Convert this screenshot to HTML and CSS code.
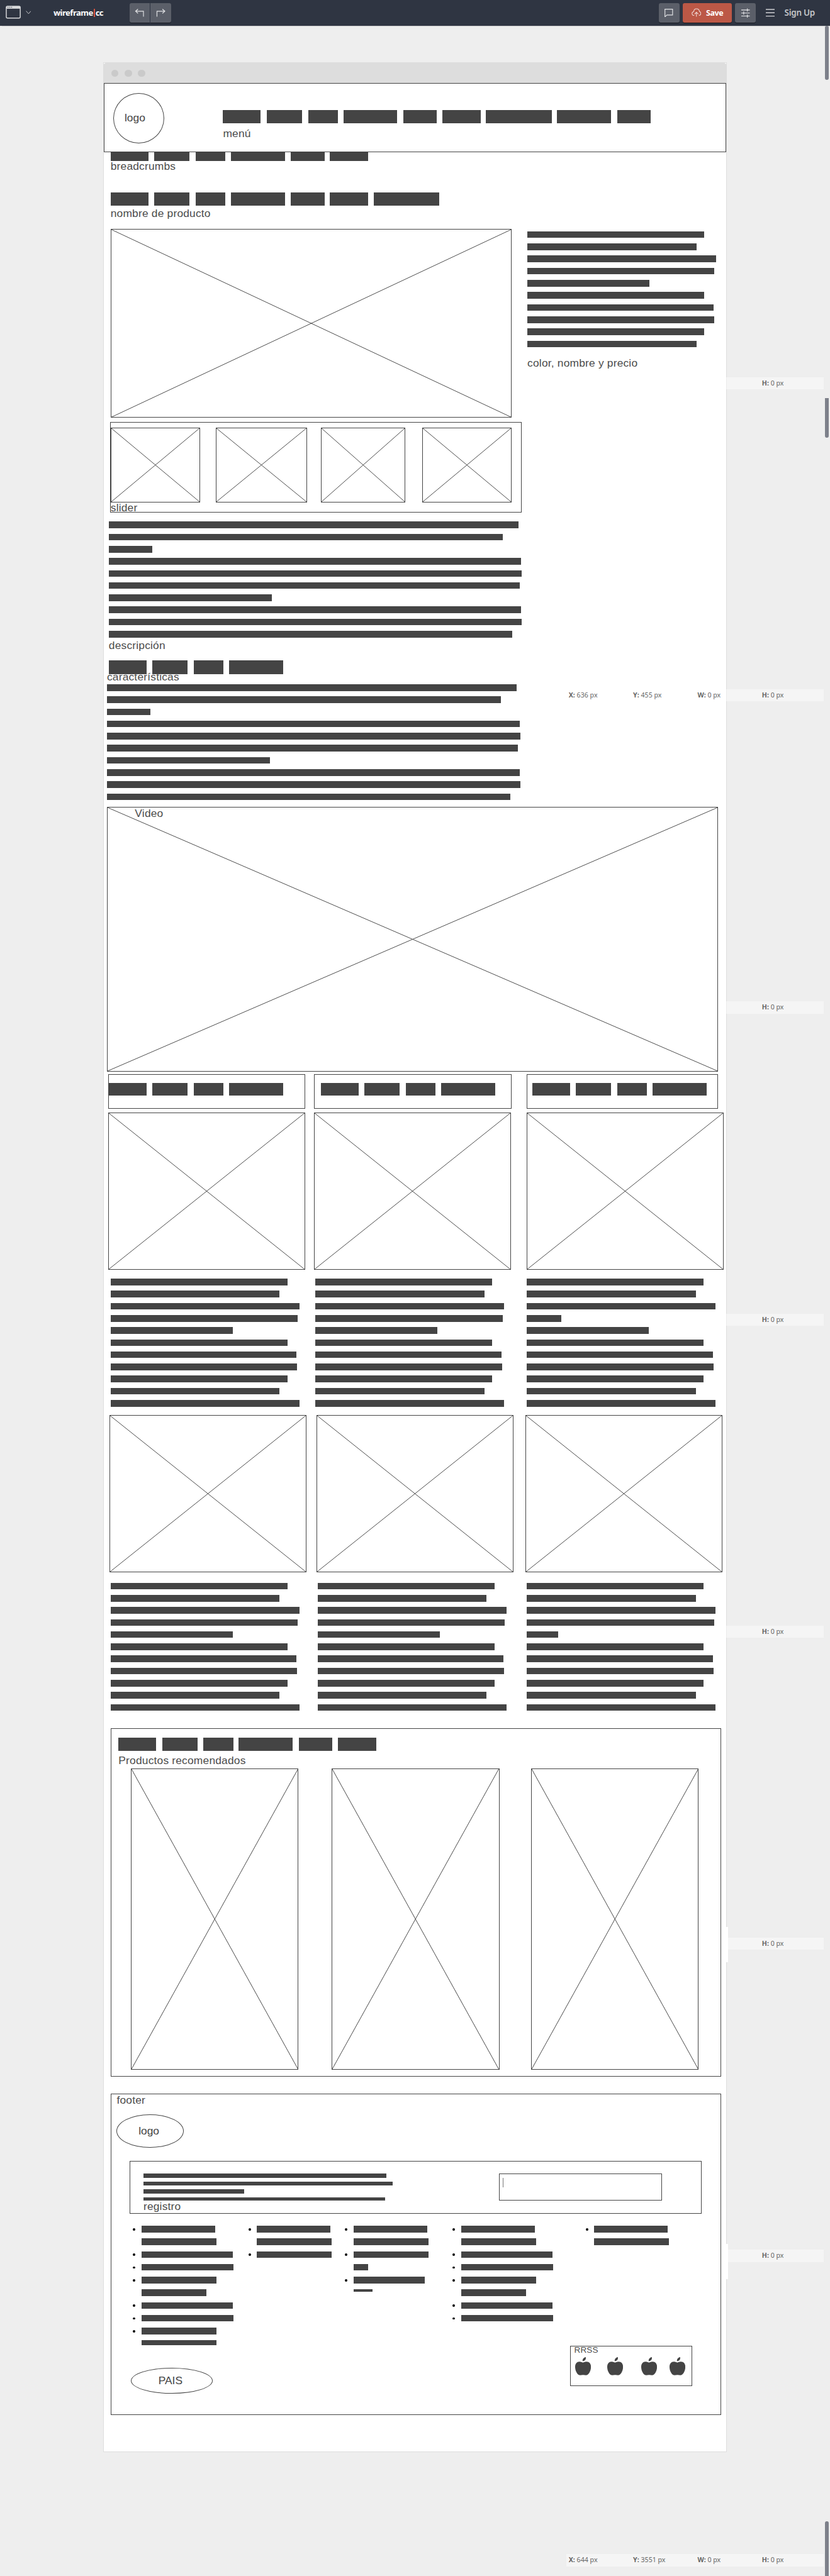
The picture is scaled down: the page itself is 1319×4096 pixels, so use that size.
FILE: index.html
```
<!DOCTYPE html>
<html lang="es">
<head>
<meta charset="utf-8">
<title>wireframe|cc</title>
<link rel="stylesheet" href="styles.css">
</head>
<body>
<svg width="0" height="0" class="defs">
  <symbol id="apple" viewBox="0 0 26 30">
    <path d="M17.5 0C18.2 3.800 16 6.400 12.200 6.600C12 3.200 13.800.6 17.500 0Z"/>
    <path d="M12.800 9C16 7.600 20 6.700 22.800 8.600C25.200 10.300 26.300 13.500 26 17C25.700 22 23.200 27.500 20 29.300C17.800 30.400 15.500 29.200 13 29.200C10.500 29.200 8.200 30.400 6 29.300C2.800 27.500.3 22 0 17C-.3 13.500.8 10.300 3.200 8.600C6 6.700 9.600 7.600 12.800 9Z"/>
  </symbol>
</svg>

<header class="topbar">
  <svg class="window-icon" width="25" height="22" viewBox="0 0 25 22"><rect x="1" y="1" width="23" height="19.500" rx="2" fill="none" stroke="#d9dadc" stroke-width="1.500"/><path d="M1 1h23v4H1z" fill="#d9dadc"/><path d="M3 2.500h1.500M6 2.500h1.500M9 2.500h1.500" stroke="#2f3542"/></svg>
  <svg class="chevron" width="9" height="6" viewBox="0 0 9 6"><path d="M.5.5l4 4.500 4-4.500" fill="none" stroke="#c9cacd"/></svg>
  <span class="brand">wireframe<b class="pipe"></b>cc</span>
  <div class="history">
    <span class="btn"><svg width="16" height="14" viewBox="0 0 16 14"><path d="M14.500 13V4H1.500M5.500.5L1.500 4l4 3.500" fill="none" stroke="#e3e4e6" stroke-width="1.200"/></svg></span>
    <span class="btn"><svg width="16" height="14" viewBox="0 0 16 14"><path d="M1.500 13V4h13M10.500.5l4 3.500-4 3.500" fill="none" stroke="#e3e4e6" stroke-width="1.200"/></svg></span>
  </div>
  <div class="actions">
    <span class="btn"><svg width="14" height="14" viewBox="0 0 14 14"><path d="M.7.7h12.600v9.600H4L.7 13.300z" fill="none" stroke="#e3e4e6" stroke-width="1.200"/></svg></span>
    <span class="btn save"><svg width="16" height="15" viewBox="0 0 16 15"><path d="M4.500 12C2 12 .8 10.500.8 8.800.8 7 2.200 6 3.500 5.800 3.800 3 5.500 1 8 1c3 0 4.800 2 5 4.500 1.500.6 2.300 1.800 2.300 3.300 0 1.800-1.300 3-3.300 3.200M8 14V7M5 9.800l3-3 3 3" fill="none" stroke="#f0dcd8" stroke-width="1.100"/></svg>Save</span>
    <span class="btn"><svg width="14" height="16" viewBox="0 0 14 16"><path d="M0 3h14M0 8h14M0 13h14M10 .5v5M4 5.500v5M10 10.500v5" fill="none" stroke="#e3e4e6" stroke-width="1.200"/></svg></span>
    <svg class="menu-icon" width="15" height="13" viewBox="0 0 15 13"><path d="M0 1h15M0 6.500h15M0 12h15" stroke="#d0d1d4" stroke-width="1.400"/></svg>
    <span class="signup">Sign Up</span>
  </div>
</header>

<main class="workspace">
  <article class="page">
    <div class="chrome"><i></i><i></i><i></i></div>

    <section class="head">
      <div class="circle">logo</div>
      <div class="nav">
        <div class="words"><i></i><i></i><i></i><i></i><i></i><i></i><i></i><i></i><i></i></div>
        <p class="label">menú</p>
      </div>
    </section>

    <section class="intro">
      <div class="words crumbs"><i></i><i></i><i></i><i></i><i></i><i></i></div>
      <p class="label crumbs-label">breadcrumbs</p>
      <div class="words"><i></i><i></i><i></i><i></i><i></i><i></i><i></i></div>
      <p class="label name-label">nombre de producto</p>
    </section>

    <section class="product">
      <div class="gallery">
        <div class="pic main-pic"><svg><line x1="0" y1="0" x2="100%" y2="100%"/><line x1="100%" y1="0" x2="0" y2="100%"/></svg></div>
        <div class="slider">
          <div class="thumbs">
            <div class="pic"><svg><line x1="0" y1="0" x2="100%" y2="100%"/><line x1="100%" y1="0" x2="0" y2="100%"/></svg></div>
            <div class="pic"><svg><line x1="0" y1="0" x2="100%" y2="100%"/><line x1="100%" y1="0" x2="0" y2="100%"/></svg></div>
            <div class="pic"><svg><line x1="0" y1="0" x2="100%" y2="100%"/><line x1="100%" y1="0" x2="0" y2="100%"/></svg></div>
            <div class="pic"><svg><line x1="0" y1="0" x2="100%" y2="100%"/><line x1="100%" y1="0" x2="0" y2="100%"/></svg></div>
          </div>
          <p class="label">slider</p>
        </div>
      </div>
      <div class="details">
        <div class="para"><i></i><i></i><i></i><i></i><i></i><i></i><i></i><i></i><i></i><i></i></div>
        <p class="label">color, nombre y precio</p>
      </div>
    </section>

    <section class="description">
      <div class="para wide"><i></i><i></i><i></i><i></i><i></i><i></i><i></i><i></i><i></i><i></i></div>
      <p class="label">descripción</p>
      <div class="words"><i></i><i></i><i></i><i></i></div>
    </section>
    <section class="features">
      <p class="label">características</p>
      <div class="para wide"><i></i><i></i><i></i><i></i><i></i><i></i><i></i><i></i><i></i><i></i></div>
    </section>

    <div class="pic video"><svg><line x1="0" y1="0" x2="100%" y2="100%"/><line x1="100%" y1="0" x2="0" y2="100%"/></svg><p class="label">Video</p></div>

    <section class="titles">
      <div class="words"><i></i><i></i><i></i><i></i></div>
      <div class="words"><i></i><i></i><i></i><i></i></div>
      <div class="words"><i></i><i></i><i></i><i></i></div>
    </section>
    <section class="pics pics-a">
      <div class="pic"><svg><line x1="0" y1="0" x2="100%" y2="100%"/><line x1="100%" y1="0" x2="0" y2="100%"/></svg></div>
      <div class="pic"><svg><line x1="0" y1="0" x2="100%" y2="100%"/><line x1="100%" y1="0" x2="0" y2="100%"/></svg></div>
      <div class="pic"><svg><line x1="0" y1="0" x2="100%" y2="100%"/><line x1="100%" y1="0" x2="0" y2="100%"/></svg></div>
    </section>
    <section class="texts texts-a">
      <div class="para"><i></i><i></i><i></i><i></i><i></i><i></i><i></i><i></i><i></i><i></i><i></i></div>
      <div class="para"><i></i><i></i><i></i><i></i><i></i><i></i><i></i><i></i><i></i><i></i><i></i></div>
      <div class="para"><i></i><i></i><i></i><i style="width:57px"></i><i></i><i></i><i></i><i></i><i></i><i></i><i></i></div>
    </section>
    <section class="pics pics-b">
      <div class="pic"><svg><line x1="0" y1="0" x2="100%" y2="100%"/><line x1="100%" y1="0" x2="0" y2="100%"/></svg></div>
      <div class="pic"><svg><line x1="0" y1="0" x2="100%" y2="100%"/><line x1="100%" y1="0" x2="0" y2="100%"/></svg></div>
      <div class="pic"><svg><line x1="0" y1="0" x2="100%" y2="100%"/><line x1="100%" y1="0" x2="0" y2="100%"/></svg></div>
    </section>
    <section class="texts texts-b">
      <div class="para"><i></i><i></i><i></i><i></i><i></i><i></i><i></i><i></i><i></i><i></i><i></i></div>
      <div class="para"><i></i><i></i><i></i><i></i><i></i><i></i><i></i><i></i><i></i><i></i><i></i></div>
      <div class="para"><i></i><i></i><i></i><i></i><i style="width:52px"></i><i></i><i></i><i></i><i></i><i></i><i></i></div>
    </section>

    <section class="recommended">
      <div class="words"><i></i><i></i><i></i><i></i><i></i><i></i></div>
      <p class="label">Productos recomendados</p>
      <div class="cards">
        <div class="pic"><svg><line x1="0" y1="0" x2="100%" y2="100%"/><line x1="100%" y1="0" x2="0" y2="100%"/></svg></div>
        <div class="pic"><svg><line x1="0" y1="0" x2="100%" y2="100%"/><line x1="100%" y1="0" x2="0" y2="100%"/></svg></div>
        <div class="pic"><svg><line x1="0" y1="0" x2="100%" y2="100%"/><line x1="100%" y1="0" x2="0" y2="100%"/></svg></div>
      </div>
    </section>

    <footer class="footer">
      <p class="label">footer</p>
      <div class="oval">logo</div>
      <div class="register">
        <div class="register-text">
          <div class="para fine"><i></i><i></i><i></i><i></i></div>
          <p class="label">registro</p>
        </div>
        <div class="field"><span class="caret"></span></div>
      </div>
      <div class="lists">
        <ul>
          <li><i style="width:121px"></i><i style="width:123px"></i></li>
          <li><i style="width:150px"></i></li>
          <li><i style="width:151px"></i></li>
          <li><i style="width:123px"></i><i style="width:107px"></i></li>
          <li><i style="width:150px"></i></li>
          <li><i style="width:151px"></i></li>
          <li><i style="width:123px"></i><i class="cut" style="width:123px"></i></li>
        </ul>
        <ul>
          <li><i style="width:121px"></i><i style="width:123px"></i></li>
          <li><i style="width:123px"></i></li>
        </ul>
        <ul>
          <li><i style="width:121px"></i><i style="width:123px"></i></li>
          <li><i style="width:123px"></i><i style="width:24px"></i></li>
          <li><i style="width:117px"></i><i class="sliver" style="width:31px"></i></li>
        </ul>
        <ul>
          <li><i style="width:121px"></i><i style="width:123px"></i></li>
          <li><i style="width:150px"></i></li>
          <li><i style="width:151px"></i></li>
          <li><i style="width:123px"></i><i style="width:107px"></i></li>
          <li><i style="width:150px"></i></li>
          <li><i style="width:151px"></i></li>
        </ul>
        <ul>
          <li><i style="width:121px"></i><i style="width:123px"></i></li>
        </ul>
      </div>
      <div class="closing">
        <div class="oval country">PAIS</div>
        <div class="social">
          <p class="label">RRSS</p>
          <div class="apples">
            <svg><use href="#apple"/></svg>
            <svg><use href="#apple"/></svg>
            <svg><use href="#apple"/></svg>
            <svg><use href="#apple"/></svg>
          </div>
        </div>
      </div>
    </footer>
  </article>

  <span class="nub nub-a"></span>
  <span class="nub nub-b"></span>
  <div class="status s1"><span></span><span></span><span></span><span><b>H:</b> 0 px</span></div>
  <div class="status s2"><span><b>X:</b> 636 px</span><span><b>Y:</b> 455 px</span><span><b>W:</b> 0 px</span><span><b>H:</b> 0 px</span></div>
  <div class="status s3"><span></span><span></span><span></span><span><b>H:</b> 0 px</span></div>
  <div class="status s4"><span></span><span></span><span></span><span><b>H:</b> 0 px</span></div>
  <div class="status s5"><span></span><span></span><span></span><span><b>H:</b> 0 px</span></div>
  <div class="status s6"><span></span><span></span><span></span><span><b>H:</b> 0 px</span></div>
  <div class="status s7"><span></span><span></span><span></span><span><b>H:</b> 0 px</span></div>
  <div class="status s8"><span><b>X:</b> 644 px</span><span><b>Y:</b> 3551 px</span><span><b>W:</b> 0 px</span><span><b>H:</b> 0 px</span></div>
  <span class="thumb t1"></span>
  <span class="thumb t2"></span>
  <span class="thumb t3"></span>
</main>
</body>
</html>
```
FILE: styles.css
```
:root { --ink: #444; }
* { box-sizing: border-box; }
html { zoom: .96558; overflow: hidden; background: #eee; }
body { margin: 0; width: 1366px; height: 4242px; background: #eee; color: var(--ink); font-family: "Liberation Sans", Arial, sans-serif; font-size: 18px; line-height: 20px; }
p, ul { margin: 0; padding: 0; }
svg { display: block; flex: none; }
.defs { position: absolute; }

/* toolbar */
.topbar { display: flex; align-items: center; height: 42px; padding-left: 9px; background: #2f3542; box-shadow: 0 1px 1px rgba(0,0,0,.15); font-family: "Noto Sans", sans-serif; }
.window-icon { margin-top: -1px; }
.chevron { margin-left: 8px; }
.brand { display: flex; align-items: center; width: 125px; margin-left: 37px; color: #fff; font: bold 13.500px/20px "Noto Sans", sans-serif; letter-spacing: -.5px; }
.pipe { width: 2px; height: 14px; margin: 0 1px; background: #d9543f; }
.history { display: flex; gap: 1px; }
.history .btn:first-child { border-radius: 3px 0 0 3px; }
.history .btn:last-child { border-radius: 0 3px 3px 0; }
.actions { display: flex; align-items: center; gap: 6px; margin-left: auto; padding-right: 23px; }
.btn { display: flex; align-items: center; justify-content: center; width: 34px; height: 32px; border-radius: 3px; background: #5b5f69; box-shadow: 0 1px 0 #15181f; }
.save { width: 80px; gap: 8px; background: #bc5846; color: #fff; font-size: 13px; font-weight: bold; letter-spacing: -.5px; }
.menu-icon { margin-left: 10px; }
.signup { margin-left: 10px; width: 52px; color: #c4c5c8; font-size: 14px; font-weight: 600; letter-spacing: -.3px; white-space: nowrap; }

/* canvas */
.workspace { position: relative; height: 4200px; padding: 62px 0 0 171px; overflow: hidden; }
.page { width: 1024px; height: 3933px; background: #fff; box-shadow: 0 0 0 1px #ddd; }
.chrome { display: flex; gap: 10px; align-items: center; height: 33px; margin: 0 -1px; padding: 0 13px; border-radius: 5px 5px 0 0; background: #ddd; }
.chrome i { width: 12px; height: 12px; border-radius: 50%; background: #cacaca; }

/* placeholders */
.label { white-space: nowrap; color: #4c4c4c; letter-spacing: .2px; }
.words { display: flex; gap: 9px; height: 22px; }
.words i { width: 62px; background: var(--ink); }
.words i:nth-child(1), .words i:nth-child(2), .words i:nth-child(4), .words i:nth-child(8) { margin-right: 1px; }
.words i:nth-child(2) { width: 58px; }
.words i:nth-child(3) { width: 49px; }
.words i:nth-child(4), .words i:nth-child(8) { width: 89px; }
.words i:nth-child(5), .words i:nth-child(9) { width: 55px; }
.words i:nth-child(6) { width: 63px; }
.words i:nth-child(7) { width: 108px; }
.para { display: flex; flex-direction: column; gap: 9px; }
.para i { height: 11px; width: 291px; background: var(--ink); }
.para i:nth-child(2), .para i:nth-child(10) { width: 278px; }
.para i:nth-child(3), .para i:nth-child(11) { width: 311px; }
.para i:nth-child(4) { width: 308px; }
.para i:nth-child(5) { width: 201px; }
.para i:nth-child(7) { width: 306px; }
.para i:nth-child(8) { width: 307px; }
.wide i:nth-child(1) { width: 674px; }
.wide i:nth-child(2) { width: 648px; }
.wide i:nth-child(3) { width: 72px; }
.wide i:nth-child(4), .wide i:nth-child(8) { width: 679px; }
.wide i:nth-child(5), .wide i:nth-child(9) { width: 680px; }
.wide i:nth-child(6) { width: 676px; }
.wide i:nth-child(7) { width: 268px; }
.wide i:nth-child(10) { width: 664px; }
.pic { border: 1px solid var(--ink); }
.pic svg { width: 100%; height: 100%; stroke: var(--ink); stroke-width: 1; }

.head { display: flex; height: 114px; padding: 15px 0 0 14px; border: 1px solid var(--ink); }
.circle { display: flex; align-items: center; width: 84px; height: 83px; padding-left: 18px; border: 1px solid var(--ink); border-radius: 50%; }
.nav { margin: 28px 0 0 97px; }
.nav .label { margin-top: 7px; }

.intro { padding-left: 11px; }
.crumbs { height: 14px; }
.crumbs-label { margin: -1px 0 33px; }
.name-label { margin-top: 3px; margin-bottom: -1px; }

.product { display: flex; gap: 9px; margin: 16px 0 0 10px; }
.main-pic { width: 660px; height: 311px; margin-left: 1px; }
.slider { width: 678px; height: 149px; margin-top: 7px; padding-top: 8px; border: 1px solid var(--ink); }
.thumbs { display: flex; height: 123px; }
.thumbs .pic { width: 147px; height: 123px; }
.thumbs .pic:nth-child(2) { width: 150px; margin: 0 23px 0 26px; }
.thumbs .pic:nth-child(3) { width: 139px; margin-right: 28px; }
.slider .label { margin-top: -1px; }
.details { padding-top: 4px; }
.details .label { margin-top: 16px; }

.description { margin: 15px 0 0 8px; }
.description .label { margin: 3px 0 15px; }
.features { margin-left: 5px; }
.features .label { margin: -5px 0 2px; }

.video { position: relative; width: 1006px; height: 436px; margin: 11px 0 0 5px; }
.video .label { position: absolute; left: 45px; top: 0; }

.titles { display: grid; grid-template-columns: 324px 325px 315px; column-gap: 15px; margin: 4px 0 0 7px; }
.titles .words { height: 57px; padding: 14px 0 20px; border: 1px solid var(--ink); }
.titles .words:nth-child(2) { padding-left: 10px; }
.titles .words:nth-child(3) { margin: 0 -10px 0 10px; padding-left: 8px; }
.pics { display: flex; }
.pics .pic { width: 324px; height: 259px; }
.pics-a { margin: 6px 0 0 7px; gap: 15px; }
.pics-a .pic:last-child { margin-left: 11px; }
.pics-b { margin: 14px 0 0 9px; gap: 17px; }
.pics-b .pic:last-child { margin-left: 3px; }
.texts { display: grid; padding-left: 11px; }
.texts-a { grid-template-columns: 337px 348px 1fr; margin-top: 15px; }
.texts-b { grid-template-columns: 341px 344px 1fr; margin-top: 17px; }

.recommended { width: 1005px; height: 574px; margin: 29px 0 0 11px; padding: 14px 0 0 12px; border: 1px solid var(--ink); }
.recommended .label { margin: 6px 0 3px; }
.cards { display: flex; gap: 52px; margin-left: 20px; }
.cards .pic { width: 276px; height: 496px; }
.cards .pic:first-child { margin-right: 3px; }

.footer { width: 1005px; height: 529px; margin: 28px 0 0 11px; border: 1px solid var(--ink); }
.footer > .label { margin: -1px 0 14px 9px; }
.oval { display: flex; align-items: center; justify-content: center; width: 110px; height: 55px; margin-left: 9px; padding-right: 4px; border: 1px solid var(--ink); border-radius: 50%; }
.register { display: flex; width: 942px; height: 87px; margin: 21px 0 0 30px; padding: 20px 0 0 22px; border: 1px solid var(--ink); }
.register-text { width: 410px; }
.register-text .label { margin-top: 0; }
.fine { gap: 6px; }
.fine i { height: 7px; }
.fine i:nth-child(1) { width: 400px; }
.fine i:nth-child(2) { width: 410px; }
.fine i:nth-child(3) { width: 166px; }
.fine i:nth-child(4) { width: 398px; height: 6px; }
.field { width: 269px; height: 45px; margin-left: 175px; padding: 6px 0 0 5px; border: 1px solid var(--ink); }
.caret { display: block; width: 1.500px; height: 16px; background: #777; }
.lists { display: grid; grid-template-columns: 190px 159px 177px 219px 1fr; height: 197px; margin: 20px 0 0 50px; }
.lists ul, .lists li { display: flex; flex-direction: column; gap: 10px; list-style: none; }
.lists li { position: relative; }
.lists li::before { content: ""; position: absolute; left: -14px; top: 4px; width: 4px; height: 4px; border-radius: 50%; background: #000; }
.lists i { height: 11px; background: var(--ink); }
.lists i.cut { height: 8px; }
.lists i.sliver { height: 4px; }
.closing { display: flex; margin-top: 1px; }
.country { width: 135px; height: 43px; margin: 36px 0 0 32px; }
.social { width: 201px; height: 66px; margin-left: 588px; padding-left: 6px; border: 1px solid var(--ink); }
.social .label { margin-top: -2px; font-size: 14px; line-height: 16px; }
.apples { display: flex; gap: 21px; margin: 3px 0 0 2px; }
.apples svg { width: 26px; height: 30px; fill: var(--ink); }
.apples svg:nth-child(1) { margin-right: 5px; }
.apples svg:nth-child(2) { margin-right: 9px; }

/* editor overlays on the canvas */
.status { position: absolute; left: 932px; width: 424px; height: 20px; display: grid; grid-template-columns: repeat(4, 106px); padding-left: 4px; background: rgba(255,255,255,.4); color: #666; font: 11px/20px "Noto Sans", sans-serif; white-space: nowrap; }
.s1 { top: 579px; left: 1195px; width: 161px; }
.s1, .s3, .s4, .s6, .s7 { grid-template-columns: 0 0 0 106px; padding-left: 59px; }
.s2 { top: 1093px; }
.s3 { top: 1607px; left: 1195px; width: 161px; }
.s4 { top: 2121px; left: 1195px; width: 161px; }
.s5 { top: 2635px; }
.s6 { top: 3149px; left: 1195px; width: 161px; }
.s7 { top: 3663px; left: 1195px; width: 161px; }
.s8 { top: 4164px; }
.nub { position: absolute; left: 1194px; width: 4px; height: 58px; background: #fff; }
.nub-a { top: 3131px; }
.nub-b { top: 3653px; }
.thumb { position: absolute; left: 1358px; width: 6px; background: #7d808a; }
.t1 { top: 0; height: 90px; border-radius: 3px; }
.t2 { top: 614px; height: 65px; border-radius: 0 0 3px 3px; }
.t3 { top: 4110px; height: 90px; border-radius: 3px 3px 0 0; }
```
